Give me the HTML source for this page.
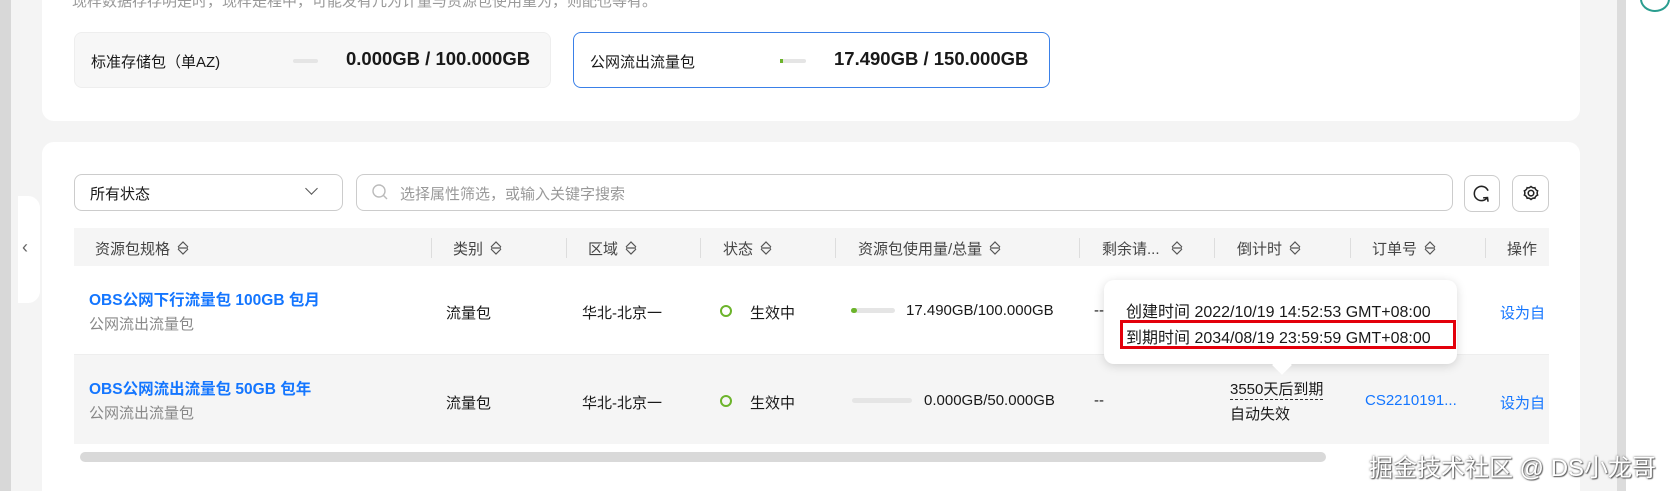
<!DOCTYPE html>
<html style="overflow:hidden;height:491px"><head><meta charset="utf-8"><style>
*{margin:0;padding:0;box-sizing:border-box}
body{width:1677px;height:491px;overflow:hidden;background:#f4f4f4;position:relative;font-family:"Liberation Sans","Noto Sans CJK SC",sans-serif;font-size:15px;color:#191919}
.a{position:absolute;white-space:nowrap}
.card{position:absolute;background:#fff;border-radius:12px}
.box{position:absolute;border-radius:8px;height:56px}
.sep{position:absolute;top:238px;width:1px;height:20px;background:#ddd}
.h{position:absolute;top:238px;color:#444;font-size:15px}
.so{display:inline-block;margin-left:6px;vertical-align:-2px}
.blue{color:#1476ff}
</style></head><body>
<svg width="0" height="0" style="position:absolute"><defs><symbol id="s" viewBox="0 0 14 16"><path d="M2 7L7 2L12 7M2 9L7 14L12 9M2 8H12" fill="none" stroke="#555" stroke-width="1.2"/></symbol></defs></svg>
<div class="a" style="left:0;top:0;width:11px;height:491px;background:#d8d8d8"></div>
<div class="a" style="left:1617px;top:0;width:9px;height:491px;background:#dcdcdc"></div>
<div class="a" style="left:1626px;top:0;width:51px;height:491px;background:#fff"></div>
<div class="a" style="left:1640px;top:-14px;width:30px;height:26px;border:2px solid #2a9d8f;border-radius:50%"></div>
<div class="card" style="left:42px;top:-20px;width:1538px;height:141px"></div>
<div class="a" style="left:72px;top:-10px;color:#999;font-size:15px">现样数据存存明是时，现样是程中，可能发有几为计量与资源包使用重为，则配也等有。</div>
<div class="box" style="left:74px;top:32px;width:477px;background:#f7f7f7;border:1px solid #eee"></div>
<div class="a" style="left:91px;top:51px">标准存储包（单AZ)</div>
<div class="a" style="left:293px;top:59px;width:25px;height:4px;background:#e5e5e5;border-radius:2px"></div>
<div class="a" style="left:346px;top:48px;font-size:18.5px;font-weight:bold">0.000GB / 100.000GB</div>
<div class="box" style="left:573px;top:32px;width:477px;background:#fff;border:1px solid #3a80e8"></div>
<div class="a" style="left:590px;top:51px">公网流出流量包</div>
<div class="a" style="left:780px;top:59px;width:26px;height:4px;background:#e5e5e5;border-radius:2px"><div style="width:3px;height:4px;background:#6cb42b"></div></div>
<div class="a" style="left:834px;top:48px;font-size:18.5px;font-weight:bold">17.490GB / 150.000GB</div>

<div class="card" style="left:42px;top:142px;width:1538px;height:349px;border-radius:12px 12px 0 0"></div>
<div class="a" style="left:18px;top:196px;width:22px;height:107px;background:#fff;border-radius:0 12px 12px 0"></div>
<div class="a" style="left:22px;top:237px;color:#666;font-size:18px">&lsaquo;</div>
<div class="a" style="left:74px;top:174px;width:269px;height:37px;border:1px solid #ccc;border-radius:8px;background:#fff"></div>
<div class="a" style="left:90px;top:183px">所有状态</div>
<div class="a" style="left:307px;top:184px;width:9px;height:9px;border-right:1.5px solid #555;border-bottom:1.5px solid #555;transform:rotate(45deg)"></div>
<div class="a" style="left:356px;top:174px;width:1097px;height:37px;border:1px solid #ccc;border-radius:8px;background:#fff"></div>
<svg class="a" style="left:371px;top:183px" width="18" height="18" viewBox="0 0 18 18"><circle cx="8" cy="8" r="6" fill="none" stroke="#bbb" stroke-width="1.4"/><path d="M12.5 12.5L16 16" stroke="#bbb" stroke-width="1.4"/></svg>
<div class="a" style="left:400px;top:183px;color:#999">选择属性筛选，或输入关键字搜索</div>
<div class="a" style="left:1464px;top:175px;width:36px;height:37px;border:1px solid #ccc;border-radius:8px;background:#fff"></div>
<svg class="a" style="left:1471px;top:183px" width="22" height="22" viewBox="0 0 20 20"><path d="M15 13A6.5 6.5 0 1 1 15.5 7" fill="none" stroke="#222" stroke-width="1.4"/><path d="M11 13.5L15 13.2L15.5 17" fill="none" stroke="#222" stroke-width="1.4"/></svg>
<div class="a" style="left:1512px;top:175px;width:37px;height:37px;border:1px solid #ccc;border-radius:8px;background:#fff"></div>
<svg class="a" style="left:1519px;top:182px" width="24" height="24" viewBox="0 0 20 20"><path d="M10 2.3c1 .9 2 1.3 3.2 1 .3 1.3 1 2 2.3 2.6-.5 1.2-.5 2.3 0 3.5-1.2.5-2 1.3-2.3 2.6-1.2-.3-2.2.1-3.2 1-1-.9-2-1.3-3.2-1-.3-1.3-1-2-2.3-2.6.5-1.2.5-2.3 0-3.5 1.2-.5 2-1.3 2.3-2.6 1.2.3 2.2-.1 3.2-1z" transform="translate(0,1.5)" fill="none" stroke="#222" stroke-width="1.3"/><circle cx="10" cy="9.3" r="2.3" fill="none" stroke="#222" stroke-width="1.3"/></svg>

<div class="a" style="left:74px;top:228px;width:1475px;height:38px;background:#f5f5f5"></div>
<div class="h" style="left:95px">资源包规格<svg class="so" width="14" height="16"><use href="#s"/></svg></div>
<div class="sep" style="left:431px"></div><div class="h" style="left:453px">类别<svg class="so" width="14" height="16"><use href="#s"/></svg></div>
<div class="sep" style="left:566px"></div><div class="h" style="left:588px">区域<svg class="so" width="14" height="16"><use href="#s"/></svg></div>
<div class="sep" style="left:700px"></div><div class="h" style="left:723px">状态<svg class="so" width="14" height="16"><use href="#s"/></svg></div>
<div class="sep" style="left:835px"></div><div class="h" style="left:858px">资源包使用量/总量<svg class="so" width="14" height="16"><use href="#s"/></svg></div>
<div class="sep" style="left:1079px"></div><div class="h" style="left:1102px">剩余请...<svg class="so" style="margin-left:10px" width="14" height="16"><use href="#s"/></svg></div>
<div class="sep" style="left:1214px"></div><div class="h" style="left:1237px">倒计时<svg class="so" width="14" height="16"><use href="#s"/></svg></div>
<div class="sep" style="left:1350px"></div><div class="h" style="left:1372px">订单号<svg class="so" width="14" height="16"><use href="#s"/></svg></div>
<div class="sep" style="left:1485px"></div><div class="h" style="left:1507px">操作</div>

<div class="a" style="left:74px;top:266px;width:1475px;height:89px;background:#fff;border-bottom:1px solid #eee"></div>
<div class="a" style="left:74px;top:355px;width:1475px;height:89px;background:#f5f5f5"></div>

<div class="a blue" style="left:89px;top:288px;font-weight:bold;font-size:15.5px">OBS公网下行流量包 100GB 包月</div>
<div class="a" style="left:89px;top:313px;color:#888">公网流出流量包</div>
<div class="a" style="left:446px;top:302px">流量包</div>
<div class="a" style="left:582px;top:302px">华北-北京一</div>
<div class="a" style="left:720px;top:305px;width:12px;height:12px;border:2.5px solid #6cb42b;border-radius:50%"></div>
<div class="a" style="left:750px;top:302px">生效中</div>
<div class="a" style="left:851px;top:308px;width:44px;height:5px;background:#e5e5e5;border-radius:3px"><div style="width:6px;height:5px;background:#6cb42b;border-radius:3px"></div></div>
<div class="a" style="left:906px;top:302px">17.490GB/100.000GB</div>
<div class="a" style="left:1094px;top:302px">--</div>
<div class="a blue" style="left:1500px;top:302px">设为自</div>

<div class="a blue" style="left:89px;top:377px;font-weight:bold;font-size:15.5px">OBS公网流出流量包 50GB 包年</div>
<div class="a" style="left:89px;top:402px;color:#888">公网流出流量包</div>
<div class="a" style="left:446px;top:392px">流量包</div>
<div class="a" style="left:582px;top:392px">华北-北京一</div>
<div class="a" style="left:720px;top:395px;width:12px;height:12px;border:2.5px solid #6cb42b;border-radius:50%"></div>
<div class="a" style="left:750px;top:392px">生效中</div>
<div class="a" style="left:852px;top:398px;width:60px;height:5px;background:#e5e5e5;border-radius:3px"></div>
<div class="a" style="left:924px;top:392px">0.000GB/50.000GB</div>
<div class="a" style="left:1094px;top:392px">--</div>
<div class="a" style="left:1230px;top:378px;border-bottom:1px dashed #333">3550天后到期</div>
<div class="a" style="left:1230px;top:403px">自动失效</div>
<div class="a blue" style="left:1365px;top:392px">CS2210191...</div>
<div class="a blue" style="left:1500px;top:392px">设为自</div>

<div class="a" style="left:80px;top:452px;width:1246px;height:10px;background:#d9d9d9;border-radius:5px"></div>

<div class="a" style="left:1104px;top:280px;width:353px;height:84px;background:#fff;border-radius:10px;box-shadow:0 2px 10px rgba(0,0,0,.15)"></div>
<div class="a" style="left:1275px;top:358px;width:14px;height:14px;background:#fff;transform:rotate(45deg)"></div>
<div class="a" style="left:1126px;top:298px;font-size:16px">创建时间 2022/10/19 14:52:53 GMT+08:00</div>
<div class="a" style="left:1120px;top:320px;width:336px;height:29px;border:3px solid #e3000b"></div>
<div class="a" style="left:1126px;top:324px;font-size:16px">到期时间 2034/08/19 23:59:59 GMT+08:00</div>

<div class="a" style="left:1369px;top:448px;font-size:24px;color:#fff;text-shadow:0 0 2px #555,1px 1px 1px #666">掘金技术社区 @ DS小龙哥</div>
</body></html>
